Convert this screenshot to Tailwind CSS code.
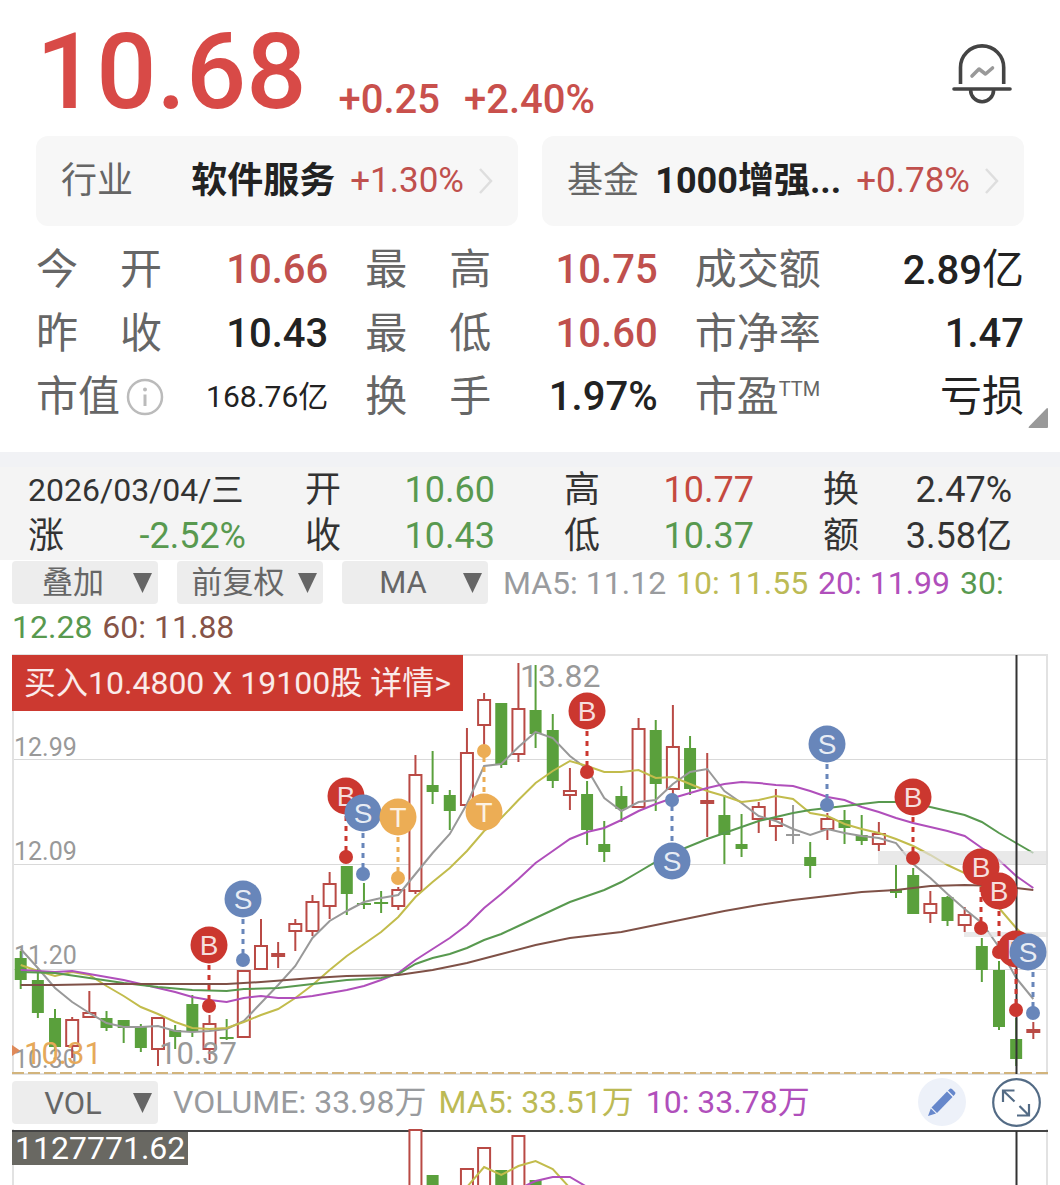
<!DOCTYPE html>
<html lang="zh-CN">
  <head>
    <meta charset="UTF-8" />
    <meta name="viewport" content="width=device-width, initial-scale=1.0" />
    <script src="https://cdn.jsdelivr.net/npm/@tailwindcss/browser@4"></script>
    <title>个股行情</title>
  </head>
  <body
    class="bg-white text-[#222] font-[Roboto,'Noto_Sans_CJK_SC',sans-serif] overflow-x-hidden"
  >
    <!-- price -->
    <header class="flex justify-between items-start px-9">
      <div class="flex items-end gap-6 pt-2 text-[#c9504c] font-medium">
        <h1 class="mr-2 text-[106px] leading-[128px] text-[#d84a47]">10.68</h1>
        <span class="text-[40px] leading-[72px]">+0.25</span>
        <span class="text-[40px] leading-[72px]">+2.40%</span>
      </div>
      <button class="mt-11 mr-3" aria-label="预警">
        <svg width="60" height="60" viewBox="0 0 60 60" fill="none">
          <g stroke="#444" stroke-width="3.6">
            <path d="M8.5 40V23.5a21.6 21.6 0 0 1 43.2 0V40" />
            <path d="M2 45H58" stroke-linecap="round" />
            <path d="M18.6 46a11.5 11.8 0 0 0 23 0" />
          </g>
          <path
            d="M20 32L27 25L33.500 30L40.500 24"
            stroke="#999"
            stroke-width="3.6"
            stroke-linecap="round"
            stroke-linejoin="round"
          />
        </svg>
      </button>
    </header>

    <!-- sector / fund -->
    <nav class="grid grid-cols-2 gap-6 px-9 text-4xl">
      <a
        href="#"
        class="flex items-center gap-[15px] h-[90px] px-[25px] rounded-xl bg-[#f7f7f7] whitespace-nowrap"
      >
        <span class="mr-auto text-[#666]">行业</span>
        <span class="font-bold">软件服务</span>
        <span class="text-[35px] text-[#c0504d]">+1.30%</span>
        <svg width="14" height="28" viewBox="0 0 14 28" fill="none">
          <path d="M1 2L12 14L1 26" stroke="#dedede" stroke-width="2.500" />
        </svg>
      </a>
      <a
        href="#"
        class="flex items-center gap-[15px] h-[90px] px-[25px] rounded-xl bg-[#f7f7f7] whitespace-nowrap"
      >
        <span class="mr-auto text-[#666]">基金</span>
        <span class="font-bold">1000增强...</span>
        <span class="text-[35px] text-[#c0504d]">+0.78%</span>
        <svg width="14" height="28" viewBox="0 0 14 28" fill="none">
          <path d="M1 2L12 14L1 26" stroke="#dedede" stroke-width="2.500" />
        </svg>
      </a>
    </nav>

    <!-- quote -->
    <section class="relative mt-3 px-9 pb-6">
      <dl
        class="grid grid-cols-[292fr_292fr_329fr] gap-x-[37px] text-[42px] leading-[63px] whitespace-nowrap"
      >
        <div class="flex justify-between">
          <dt class="flex justify-between w-[126px] text-[#666]"><span>今</span><span>开</span></dt>
          <dd class="text-[40px] font-medium text-[#c0504d]">10.66</dd>
        </div>
        <div class="flex justify-between">
          <dt class="flex justify-between w-[126px] text-[#666]"><span>最</span><span>高</span></dt>
          <dd class="text-[40px] font-medium text-[#c0504d]">10.75</dd>
        </div>
        <div class="flex justify-between">
          <dt class="text-[#666]">成交额</dt>
          <dd class="text-[40px] font-medium">2.89<span class="text-[42px] font-normal">亿</span></dd>
        </div>
        <div class="flex justify-between">
          <dt class="flex justify-between w-[126px] text-[#666]"><span>昨</span><span>收</span></dt>
          <dd class="text-[40px] font-medium">10.43</dd>
        </div>
        <div class="flex justify-between">
          <dt class="flex justify-between w-[126px] text-[#666]"><span>最</span><span>低</span></dt>
          <dd class="text-[40px] font-medium text-[#c0504d]">10.60</dd>
        </div>
        <div class="flex justify-between">
          <dt class="text-[#666]">市净率</dt>
          <dd class="text-[40px] font-medium">1.47</dd>
        </div>
        <div class="flex justify-between">
          <dt class="flex items-center gap-1.5 text-[#666]">
            市值
            <svg width="38" height="38" viewBox="0 0 38 38" fill="none" stroke="#bbb">
              <circle cx="19" cy="19" r="17" stroke-width="2.500" />
              <circle cx="19" cy="11.500" r="2" fill="#bbb" stroke="none" />
              <path d="M19 16.500V28" stroke-width="3" />
            </svg>
          </dt>
          <dd class="text-3xl leading-[63px] font-normal">168.76亿</dd>
        </div>
        <div class="flex justify-between">
          <dt class="flex justify-between w-[126px] text-[#666]"><span>换</span><span>手</span></dt>
          <dd class="text-[40px] font-medium">1.97%</dd>
        </div>
        <div class="flex justify-between">
          <dt class="flex text-[#666]">市盈<span class="text-xl leading-[48px]">TTM</span></dt>
          <dd>亏损</dd>
        </div>
      </dl>
      <svg class="absolute right-3 bottom-6" width="20" height="20" viewBox="0 0 20 20">
        <path d="M19 0Q20 0 20 1V19Q20 20 19 20H1Q0 20 1 18.500L18 1Z" fill="#999" />
      </svg>
    </section>

    <!-- selected day -->
    <section class="border-t-[15px] border-[#f1f2f5] bg-[#f4f4f4] pb-px">
      <dl
        class="grid grid-cols-[277fr_259fr_259fr_189fr] pl-7 pr-12 text-4xl leading-[46px] text-[#333] whitespace-nowrap"
      >
        <div class="text-[32px] leading-[46px]">2026/03/04/三</div>
        <div class="flex justify-between pr-[69px]">
          <dt>开</dt>
          <dd class="text-[#58994f]">10.60</dd>
        </div>
        <div class="flex justify-between pr-[69px]">
          <dt>高</dt>
          <dd class="text-[#c5493f]">10.77</dd>
        </div>
        <div class="flex justify-between">
          <dt>换</dt>
          <dd>2.47%</dd>
        </div>
        <div class="flex justify-between pr-[59px]">
          <dt>涨</dt>
          <dd class="text-[#58994f]">-2.52%</dd>
        </div>
        <div class="flex justify-between pr-[69px]">
          <dt>收</dt>
          <dd class="text-[#58994f]">10.43</dd>
        </div>
        <div class="flex justify-between pr-[69px]">
          <dt>低</dt>
          <dd class="text-[#58994f]">10.37</dd>
        </div>
        <div class="flex justify-between">
          <dt>额</dt>
          <dd>3.58亿</dd>
        </div>
      </dl>
    </section>

    <!-- indicators -->
    <section class="px-3 pt-px pb-[5px] text-[32px] leading-[44px]">
      <span class="relative inline-block align-top mr-[15px]">
        <select
          aria-label="叠加"
          class="block appearance-none w-[146px] h-[43px] pr-6 rounded bg-[#ededed] text-[31px] text-center text-[#666]"
        >
          <option>叠加</option>
        </select>
        <svg class="absolute right-1.5 top-3 pointer-events-none" width="19" height="20" viewBox="0 0 19 20">
          <path d="M0 0H19L9.500 20Z" fill="#666" />
        </svg> </span
      ><span class="relative inline-block align-top ml-1 mr-[15px]">
        <select
          aria-label="复权"
          class="block appearance-none w-[146px] h-[43px] pr-6 rounded bg-[#ededed] text-[31px] text-center text-[#666]"
        >
          <option>前复权</option>
        </select>
        <svg class="absolute right-1.5 top-3 pointer-events-none" width="19" height="20" viewBox="0 0 19 20">
          <path d="M0 0H19L9.500 20Z" fill="#666" />
        </svg> </span
      ><span class="relative inline-block align-top ml-1 mr-[15px]">
        <select
          aria-label="主图指标"
          class="block appearance-none w-[146px] h-[43px] pr-6 rounded bg-[#ededed] text-[31px] text-center text-[#666]"
        >
          <option>MA</option>
        </select>
        <svg class="absolute right-1.5 top-3 pointer-events-none" width="19" height="20" viewBox="0 0 19 20">
          <path d="M0 0H19L9.500 20Z" fill="#666" />
        </svg> </span
      ><span class="mr-0.5 text-[#999b9e]">MA5: 11.12</span>
      <span class="mr-0.5 text-[#bcba55]">10: 11.55</span>
      <span class="mr-0.5 text-[#b04fbb]">20: 11.99</span>
      <span class="text-[#58994f]">30:</span>
      <span class="mr-0.5 text-[#58994f]">12.28</span>
      <span class="text-[#865347]">60: 11.88</span>
    </section>

    <!-- candles -->
    <section class="relative px-3">
      <svg id="kline" class="block w-full" viewBox="12 3 1036 421"></svg>
      <button
        class="absolute left-3 top-px h-14 px-3 bg-[#cc3930] text-[32px] leading-[56px] text-white/90 whitespace-nowrap"
      >
        买入10.4800 X 19100股 详情&gt;
      </button>
    </section>

    <!-- volume -->
    <section class="flex items-center h-[54px] pl-3 pr-[19px] text-[32px] whitespace-nowrap">
      <span class="relative mr-[15px]">
        <select
          aria-label="副图指标"
          class="block appearance-none w-[146px] h-[43px] pr-6 rounded bg-[#ededed] text-[31px] text-center text-[#666]"
        >
          <option>VOL</option>
        </select>
        <svg class="absolute right-1.5 top-3 pointer-events-none" width="19" height="20" viewBox="0 0 19 20">
          <path d="M0 0H19L9.500 20Z" fill="#666" />
        </svg>
      </span>
      <p class="flex gap-3">
        <span class="text-[#999b9e]">VOLUME: 33.98万</span>
        <span class="text-[#bcba55]">MA5: 33.51万</span>
        <span class="text-[#b04fbb]">10: 33.78万</span>
      </p>
      <button class="ml-auto mr-[26px] size-12 shrink-0 rounded-full bg-[#edf1f9]" aria-label="画线">
        <svg width="48" height="48" viewBox="0 0 48 48">
          <g fill="#6687cb">
            <path d="M10 38L12.800 30.500L18 35.500Z" />
            <path d="M13.500 29.500L29 13.500L34.500 19L19 35Z" />
            <path d="M30 12.500L32 10.700Q33 10 34 11L37 14Q38 15 37 16.200L35.500 18Z" />
          </g>
        </svg>
      </button>
      <button class="size-[49px] shrink-0" aria-label="全屏">
        <svg width="49" height="49" viewBox="0 0 49 49" fill="none" stroke="#536b85" stroke-width="2.200">
          <circle cx="24.500" cy="24.500" r="23.300" />
          <path d="M11 24V12.500H22.500M11 12.500L22.500 23.500" />
          <path d="M37 26V37.500H25M37 37.500L27.500 28" />
        </svg>
      </button>
    </section>

    <section class="relative px-3">
      <svg id="volume" class="block w-full" viewBox="12 0 1036 57"></svg>
      <div class="absolute left-3 top-[3px] px-[3px] bg-[#696862] text-[32px] leading-[33px] text-white">
        1127771.62
      </div>
    </section>

    <script>
      const RED = "#b94a45";
      const GREEN = "#5aa03c";
      const GRAY = "#999";
      const STEP = 17.163;

      // [high, bodyTop, bodyBottom, low, up]
      const candles = [
        [300, 307, 329, 338, 0], [318, 329, 362, 367, 0], [358, 367, 396, 400, 0],
        [366, 369, 395, 407, 1], [340, 362, 366, 366, 1], [360, 367, 377, 380, 0],
        [369, 369, 377, 392, 0], [373, 376, 397, 401, 0], [367, 367, 398, 415, 1],
        [374, 379, 386, 398, 0], [344, 353, 381, 386, 0], [364, 373, 398, 409, 1],
        [368, 386, 387, 389, 0], [320, 320, 386, 386, 1], [268, 295, 318, 318, 1],
        [291, 303, 305, 317, 1], [268, 273, 280, 300, 1], [244, 251, 280, 285, 1],
        [221, 233, 255, 268, 1], [215, 215, 243, 264, 0], [232, 252, 253, 258, 0],
        [240, 251, 253, 262, 0], [236, 239, 255, 259, 1], [104, 124, 240, 243, 1],
        [100, 134, 141, 153, 0], [139, 144, 160, 179, 0], [77, 102, 154, 154, 1],
        [42, 49, 74, 97, 1], [52, 52, 114, 117, 0], [12, 58, 103, 111, 1],
        [14, 59, 83, 97, 0], [63, 79, 130, 137, 0], [117, 140, 144, 159, 1],
        [130, 143, 179, 194, 0], [170, 193, 201, 211, 0], [135, 145, 158, 171, 0],
        [67, 78, 156, 156, 1], [69, 79, 133, 160, 0], [54, 96, 138, 143, 1],
        [85, 97, 138, 144, 0], [102, 150, 151, 186, 1], [144, 164, 184, 213, 0],
        [163, 193, 198, 206, 0], [151, 156, 168, 182, 1], [138, 168, 175, 190, 1],
        [154, 183, 184, 193, 2], [191, 206, 215, 227, 0], [162, 168, 178, 189, 1],
        [159, 169, 177, 193, 0], [164, 184, 190, 194, 0], [171, 183, 193, 200, 1],
        [214, 238, 242, 247, 0], [217, 224, 263, 263, 0], [240, 253, 262, 272, 1],
        [245, 246, 270, 275, 0], [256, 264, 274, 281, 1], [287, 295, 319, 331, 0],
        [310, 319, 376, 379, 0], [367, 388, 408, 415, 0], [371, 379, 381, 388, 1],
      ];

      // moving averages as [index, y]
      const ma5 = [
        298, 317, 337, 351, 362, 372, 376, 376, 375, 380, 381, 380, 378, 370, 352,
        334, 315, 287, 270, 260, 251, 247, 244, 223, 202, 183, 153, 115, 113, 96,
        81, 87, 105, 118, 147, 160, 151, 149, 133, 121, 118, 140, 152, 165, 170,
        178, 184, 178, 182, 185, 187, 192, 213, 227, 243, 258, 272, 296, 327, 348,
      ].map((y, i) => [i, y]);
      const ma10 = [
        314, 320, 325, 321, 324, 335, 345, 356, 363, 371, 377, 378, 377, 371, 364,
        358, 347, 334, 319, 305, 293, 281, 266, 246, 231, 217, 200, 180, 167, 149,
        132, 120, 110, 115, 121, 121, 119, 127, 126, 133, 140, 145, 151, 149, 145,
        148, 162, 165, 173, 178, 182, 188, 195, 204, 214, 222, 236, 257, 277, 293,
      ].map((y, i) => [i, y]);
      const ma20 = [
        319, 320, 321, 320, 323, 326, 329, 333, 337, 341, 346, 349, 351, 347, 345,
        347, 347, 345, 342, 339, 335, 329, 322, 309, 298, 287, 274, 257, 243, 228,
        212, 200, 188, 181, 177, 169, 160, 153, 147, 142, 137, 133, 131, 132, 134,
        135, 140, 146, 149, 156, 161, 167, 172, 176, 180, 185, 197, 209, 225, 237,
      ].map((y, i) => [i, y]);
      const ma30 = [
        [0, 321], [2, 322], [4, 327], [6, 332], [8, 336], [10, 339], [12, 340],
        [13, 338], [15, 337], [17, 333], [19, 329], [21, 327], [22, 323], [23, 313],
        [24, 307], [25, 303], [26, 297], [27, 289], [28, 283], [29, 275], [30, 267],
        [31, 259], [32, 251], [33, 245], [34, 239], [35, 231], [36, 221], [37, 211],
        [38, 202], [39, 195], [40, 188], [41, 182], [42, 176], [43, 170], [44, 166],
        [45, 162], [46, 159], [48, 155], [50, 151], [52, 151], [53, 156], [54, 160],
        [55, 164], [56, 171], [57, 182], [58, 192], [59, 202],
      ];
      const ma60 = [
        [0, 334], [2, 334], [5, 333], [12, 333], [14, 331], [17, 327], [19, 325],
        [22, 324], [24, 319], [26, 312], [28, 303], [30, 294], [32, 287], [34, 283],
        [35, 281], [37, 274], [39, 267], [41, 260], [43, 254], [45, 249], [47, 245],
        [49, 241], [51, 239], [53, 235], [55, 234], [57, 235], [58, 237], [59, 239],
      ];

      // trades: [type, dotX, dotY, badgeX, badgeY]
      const trades = [
        ["B", 209, 355, 209, 294], ["S", 243, 309, 243, 248], ["B", 346, 206, 346, 145],
        ["S", 363, 223, 363, 162], ["T", 398, 227, 398, 166], ["T", 484, 100, 484, 161],
        ["B", 587, 121, 587, 60], ["S", 672, 149, 672, 210], ["S", 827, 154, 827, 93],
        ["B", 913, 207, 913, 146], ["B", 981, 277, 981, 216], ["B", 999, 301, 999, 240],
        ["B", 1016, 359, 1016, 298], ["S", 1033, 362, 1028, 301],
      ];
      const tradeColors = { B: "#cb372f", S: "#6886ba", T: "#ecad55" };

      const px = (i) => 20.7 + STEP * i;

      function line(x1, y1, x2, y2, color, width, extra = "") {
        return `<line x1="${x1}" y1="${y1}" x2="${x2}" y2="${y2}" stroke="${color}" stroke-width="${width}" ${extra}/>`;
      }

      function text(x, y, size, color, str, extra = "") {
        return `<text x="${x}" y="${y}" font-size="${size}" fill="${color}" ${extra}>${str}</text>`;
      }

      function curve(points, color) {
        const d = points.map(([i, y]) => `${px(i)},${y}`).join(" ");
        return `<polyline points="${d}" fill="none" stroke="${color}" stroke-width="2"/>`;
      }

      function bar(x, top, bottom, up) {
        if (bottom - top < 3) {
          const color = [GREEN, RED, GRAY][up];
          return line(x - 7, top + 1, x + 7, top + 1, color, up === 1 ? 4 : 2);
        }
        return up
          ? `<rect x="${x - 6}" y="${top}" width="12" height="${bottom - top}" fill="#fff" stroke="${RED}" stroke-width="2"/>`
          : `<rect x="${x - 6}" y="${top}" width="12" height="${bottom - top}" fill="${GREEN}"/>`;
      }

      function drawKline() {
        let s = "";
        for (const y of [108.5, 213.5, 318.5]) s += line(12, y, 1048, y, "#d9d9d9", 1);
        s += `<rect x="13" y="4" width="1034" height="419" fill="none" stroke="#e2e2e2" stroke-width="2"/>`;

        s += text(14, 105, 25, GRAY, "12.99");
        s += text(14, 209, 25, GRAY, "12.09");
        s += text(14, 313, 25, GRAY, "11.20");
        s += text(14, 417, 25, GRAY, "10.30");

        candles.forEach(([high, top, bottom, low, up], i) => {
          const color = [GREEN, RED, GRAY][up];
          s += line(px(i), high, px(i), low, color, 2);
          s += bar(px(i), top, bottom, up);
        });

        s += curve(ma5, "#999");
        s += curve(ma10, "#c2bc4c");
        s += curve(ma20, "#b04fbb");
        s += curve(ma30, "#58994f");
        s += curve(ma60, "#7f5147");

        // gaps
        s += `<rect x="878" y="200" width="170" height="13" fill="#e0e0e0" fill-opacity="0.7"/>`;
        s += `<rect x="964" y="281" width="84" height="5" fill="#e0e0e0" fill-opacity="0.7"/>`;

        s += text(159, 413, 31, GRAY, "10.37");
        s += text(520, 36, 32, GRAY, "13.82");
        s += text(24, 413, 31, "#e6a95a", "10.31");
        s += `<path d="M12 394L20 399.500L12 405Z" fill="#df8a5a"/>`;
        s += line(12, 422, 1048, 422, "#d2b47c", 2, 'stroke-dasharray="12 4"');
        s += line(1016.5, 4, 1016.5, 423, "#333", 2);

        for (const [type, x, y, bx, by] of trades) {
          const color = tradeColors[type];
          s += line(x, by, x, y, color, 3, 'stroke-dasharray="5 5"');
          s += `<circle cx="${x}" cy="${y}" r="7" fill="${color}"/>`;
          s += `<circle cx="${bx}" cy="${by}" r="18.5" fill="${color}"/>`;
          s += text(bx, by + 10, 28, "#fff", type, 'text-anchor="middle" fill-opacity="0.85" font-family="Liberation Sans, sans-serif"');
        }
        document.getElementById("kline").innerHTML = s;
      }

      function drawVolume() {
        let s = line(13, 0, 13, 57, "#e2e2e2", 2) + line(1047, 0, 1047, 57, "#e2e2e2", 2);
        s += line(12, 2, 1048, 2, "#444", 2);
        // [index, top, up]
        const bars = [
          [23, 1, 1], [24, 46, 0], [26, 40, 1], [27, 19, 1], [28, 41, 0], [29, 7, 1], [30, 51, 0],
        ];
        for (const [i, top, up] of bars) s += bar(px(i), top, 70, up);
        s += curve([[26, 58], [27, 38], [28, 46], [29, 37], [30, 32], [31, 40], [32, 59]], "#c2bc4c");
        s += curve([[29, 60], [30, 52], [31, 48], [32, 48], [33, 58]], "#b04fbb");
        s += line(1016.5, 2, 1016.5, 57, "#333", 2);
        document.getElementById("volume").innerHTML = s;
      }

      drawKline();
      drawVolume();
    </script>
  </body>
</html>
